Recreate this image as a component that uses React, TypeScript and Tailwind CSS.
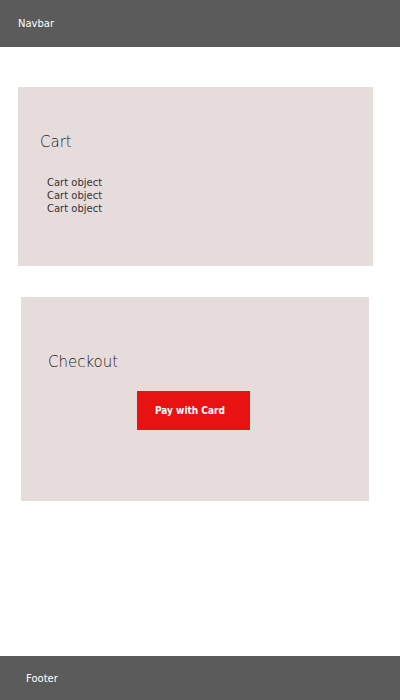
const App = () => {
  return (
    <div className="flex flex-col h-[700px] bg-white font-['DejaVu_Sans',sans-serif]">
      <nav className="flex items-center h-[47px] px-[18px] bg-[#5b5b5b] text-white text-[10px]">
        Navbar
      </nav>
      <main className="flex flex-col flex-1">
        <section className="ml-[18px] mr-[27px] mt-[40px] h-[179px] bg-[#e7dcdc] pl-[22px] pt-[45px]">
          <h2 className="text-[15px] font-extralight text-[#222] leading-[20px]">Cart</h2>
          <ul className="mt-[24px] ml-[7px] text-[10px] leading-[13px] text-[#333]">
            <li>Cart object</li>
            <li>Cart object</li>
            <li>Cart object</li>
          </ul>
        </section>
        <section className="ml-[21px] mr-[31px] mt-[31px] h-[204px] bg-[#e7dcdc] pt-[55px]">
          <h2 className="pl-[27px] text-[15px] font-extralight text-[#222] leading-[20px]">Checkout</h2>
          <div className="flex mt-[19px] pl-[116px]">
            <button className="w-[113px] h-[39px] pl-[18px] text-left bg-[#e81212] text-white text-[10px] font-bold font-['DejaVu_Sans_Condensed',sans-serif]">
              Pay with Card
            </button>
          </div>
        </section>
      </main>
      <footer className="flex items-center h-[44px] px-[26px] bg-[#5b5b5b] text-white text-[10px]">
        Footer
      </footer>
    </div>
  );
};

export default App;
